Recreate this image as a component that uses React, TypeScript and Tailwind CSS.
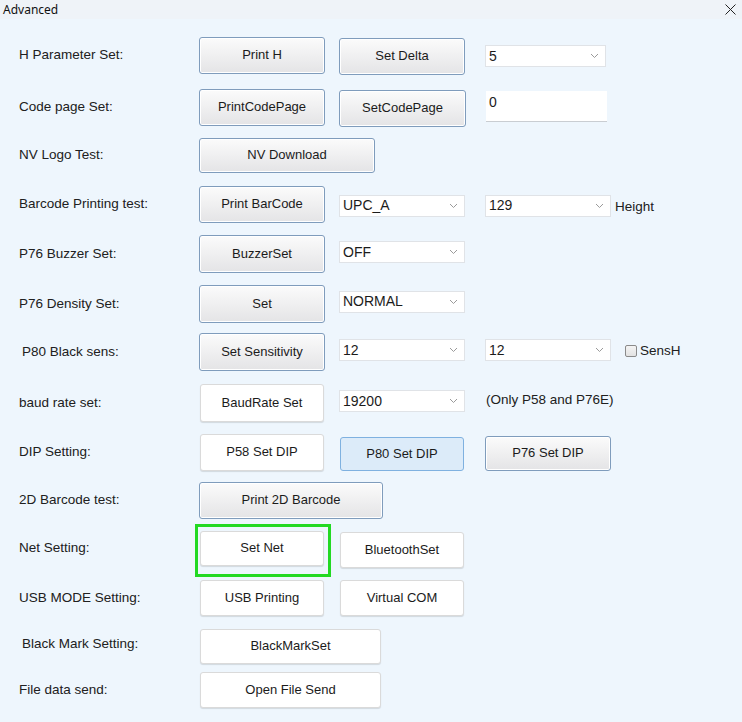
import React from 'react';

type BtnKind = 'raised' | 'flat' | 'hot';

const btnStyles: Record<BtnKind, string> = {
  raised: 'border border-[#7f9cbc] bg-gradient-to-b from-[#fbfbfb] to-[#e4e4e6] shadow-[inset_0_0_0_1px_#ffffff]',
  flat: 'border border-[#dadada] bg-white shadow-[0_1px_1px_rgba(0,0,0,0.12)]',
  hot: 'border border-[#7fb1e0] bg-[#dcebf9]',
};

const Btn: React.FC<{ label: string; w: string; h: string; kind?: BtnKind; className?: string }> = ({ label, w, h, kind = 'raised', className = '' }) => (
  <button className={`${w} ${h} ${btnStyles[kind]} ${className} shrink-0 rounded-[3px] text-[13px] text-[#1b1b1b] flex items-center justify-center`}>
    {label}
  </button>
);

const Chevron = () => (
  <svg width="9" height="6" viewBox="0 0 9 6" className="shrink-0">
    <polyline points="1,1 4.5,4.5 8,1" fill="none" stroke="#9a9a9a" strokeWidth="1" />
  </svg>
);

const Select: React.FC<{ value: string; w: string; className?: string }> = ({ value, w, className = '' }) => (
  <div className={`${w} ${className} h-[22px] shrink-0 bg-white border border-[#e0e3e7] flex items-center justify-between pl-[3px] pr-[6px] text-[14px] text-[#1b1b1b]`}>
    <span>{value}</span>
    <Chevron />
  </div>
);

const Label: React.FC<{ text: string; indent?: boolean }> = ({ text, indent }) => (
  <div className={`w-[199px] shrink-0 ${indent ? 'pl-[22px]' : 'pl-[19px]'} text-[13.5px] text-[#202020]`}>{text}</div>
);

const Row: React.FC<{ mt: string; children: React.ReactNode }> = ({ mt, children }) => (
  <div className={`flex items-center h-[40px] ${mt}`}>{children}</div>
);

export default function App() {
  return (
    <div className="w-[742px] min-h-screen h-[722px] bg-[#eef6fd] flex flex-col" style={{ fontFamily: '"Liberation Sans", Arial, sans-serif' }}>
      <div className="h-[19px] bg-[#eff3f8] flex items-center justify-between pl-[3px] pr-[6px]">
        <span className="text-[12px] text-[#111]" style={{ fontFamily: '"Noto Sans", "Open Sans", sans-serif' }}>Advanced</span>
        <svg width="11" height="11" viewBox="0 0 11 11">
          <line x1="0.5" y1="0.5" x2="10.5" y2="10.5" stroke="#222" strokeWidth="1" />
          <line x1="10.5" y1="0.5" x2="0.5" y2="10.5" stroke="#222" strokeWidth="1" />
        </svg>
      </div>

      <Row mt="mt-[16px]">
        <Label text="H Parameter Set:" />
        <Btn label="Print H" w="w-[126px]" h="h-[37px]" />
        <Btn label="Set Delta" w="w-[126px]" h="h-[37px]" className="ml-[14px] mt-[2px]" />
        <Select value="5" w="w-[121px]" className="ml-[20px] mt-[2px]" />
      </Row>

      <Row mt="mt-[12px]">
        <Label text="Code page Set:" />
        <Btn label="PrintCodePage" w="w-[126px]" h="h-[37px]" />
        <Btn label="SetCodePage" w="w-[127px]" h="h-[37px]" className="ml-[14px] mt-[2px]" />
        <div className="w-[121px] h-[31px] ml-[20px] mt-[4px] bg-white border-b border-[#c9cdd2] pl-[3px] pt-[1px] text-[14px] text-[#1b1b1b] self-start">0</div>
      </Row>

      <Row mt="mt-[8px]">
        <Label text="NV Logo Test:" />
        <Btn label="NV Download" w="w-[176px]" h="h-[35px]" />
      </Row>

      <Row mt="mt-[9px]">
        <Label text="Barcode Printing test:" />
        <Btn label="Print BarCode" w="w-[126px]" h="h-[37px]" />
        <Select value="UPC_A" w="w-[126px]" className="ml-[14px] mt-[3px]" />
        <Select value="129" w="w-[126px]" className="ml-[20px] mt-[3px]" />
        <span className="ml-[4px] mt-[7px] text-[13.5px] text-[#202020]">Height</span>
      </Row>

      <Row mt="mt-[10px]">
        <Label text="P76 Buzzer Set:" />
        <Btn label="BuzzerSet" w="w-[126px]" h="h-[38px]" />
        <Select value="OFF" w="w-[126px]" className="ml-[14px] mt-[-4px]" />
      </Row>

      <Row mt="mt-[10px]">
        <Label text="P76 Density Set:" />
        <Btn label="Set" w="w-[126px]" h="h-[38px]" />
        <Select value="NORMAL" w="w-[126px]" className="ml-[14px] mt-[-5px]" />
      </Row>

      <Row mt="mt-[8px]">
        <Label text="P80 Black sens:" indent />
        <Btn label="Set Sensitivity" w="w-[126px]" h="h-[38px]" />
        <Select value="12" w="w-[126px]" className="ml-[14px] mt-[-4px]" />
        <Select value="12" w="w-[126px]" className="ml-[20px] mt-[-4px]" />
        <div className="ml-[14px] mt-[-2px] flex items-center">
          <div className="w-[12px] h-[12px] rounded-[2px] border border-[#8a8a8a] bg-gradient-to-b from-[#f4f4f4] to-[#e2e2e2]" />
          <span className="ml-[3px] text-[13.5px] text-[#202020]">SensH</span>
        </div>
      </Row>

      <Row mt="mt-[11px]">
        <Label text="baud rate set:" />
        <Btn label="BaudRate Set" w="w-[124px]" h="h-[38px]" kind="flat" className="ml-[1px]" />
        <Select value="19200" w="w-[126px]" className="ml-[15px] mt-[-4px]" />
        <span className="ml-[21px] mt-[-6px] text-[13.5px] text-[#202020]">(Only P58 and P76E)</span>
      </Row>

      <Row mt="mt-[9px]">
        <Label text="DIP Setting:" />
        <Btn label="P58 Set DIP" w="w-[124px]" h="h-[37px]" kind="flat" className="ml-[1px]" />
        <Btn label="P80 Set DIP" w="w-[124px]" h="h-[34px]" kind="hot" className="ml-[16px] mt-[3px]" />
        <Btn label="P76 Set DIP" w="w-[126px]" h="h-[35px]" className="ml-[21px] mt-[2px]" />
      </Row>

      <Row mt="mt-[8px]">
        <Label text="2D Barcode test:" />
        <Btn label="Print 2D Barcode" w="w-[184px]" h="h-[37px]" />
      </Row>

      <Row mt="mt-[8px]">
        <Label text="Net Setting:" />
        <div className="relative ml-[1px]">
          <Btn label="Set Net" w="w-[124px]" h="h-[35px]" kind="flat" />
          <div className="absolute left-[-5px] right-[-7px] top-[-7px] bottom-[-11px] border-[3px] border-[#23d923] pointer-events-none" />
        </div>
        <Btn label="BluetoothSet" w="w-[124px]" h="h-[36px]" kind="flat" className="ml-[16px] mt-[3px]" />
      </Row>

      <Row mt="mt-[10px]">
        <Label text="USB MODE Setting:" />
        <Btn label="USB Printing" w="w-[124px]" h="h-[36px]" kind="flat" className="ml-[1px]" />
        <Btn label="Virtual COM" w="w-[124px]" h="h-[36px]" kind="flat" className="ml-[16px]" />
      </Row>

      <Row mt="mt-[6px]">
        <Label text="Black Mark Setting:" indent />
        <Btn label="BlackMarkSet" w="w-[181px]" h="h-[35px]" kind="flat" className="ml-[1px] mt-[4px]" />
      </Row>

      <Row mt="mt-[6px]">
        <Label text="File data send:" />
        <Btn label="Open File Send" w="w-[181px]" h="h-[36px]" kind="flat" className="ml-[1px]" />
      </Row>
    </div>
  );
}
